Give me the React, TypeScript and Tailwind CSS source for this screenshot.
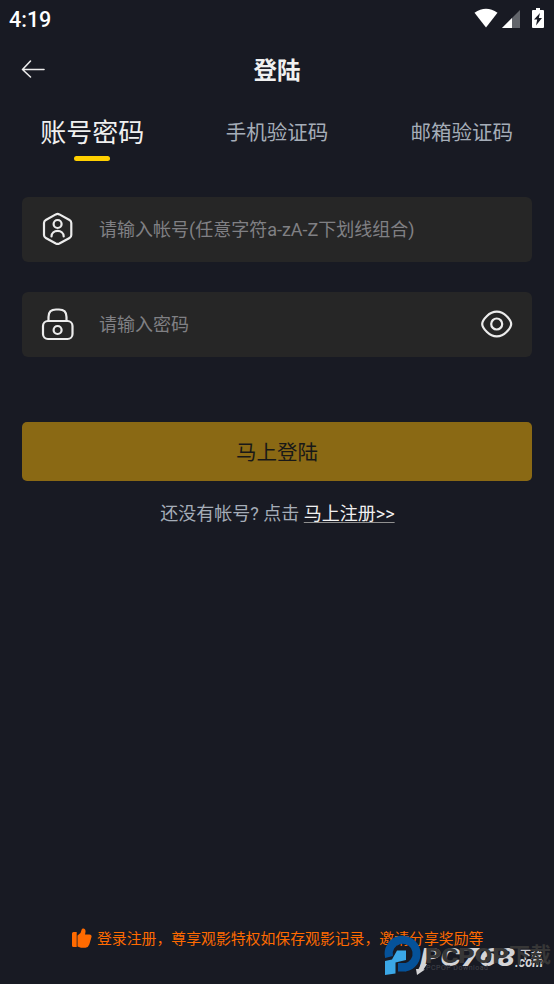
import React from "react";

const line = {
  fill: "none",
  stroke: "#ececec",
  strokeWidth: 2.2,
  strokeLinecap: "round" as const,
  strokeLinejoin: "round" as const,
};

function StatusBar() {
  return (
    <div className="flex h-[40px] items-center justify-between pl-[9px] pr-[10px]">
      <span className="text-[21.500px] font-medium leading-[38px] text-white font-['Roboto',sans-serif]">4:19</span>
      <div className="mb-[4px] flex items-center">
        <svg width="24" height="20" viewBox="0 0 24 20"><path d="M.5 4.700Q12-3.300 23.500 4.700L12 19.500Z" fill="#fff" /></svg>
        <svg className="ml-[4px] mt-[2px]" width="18" height="18" viewBox="0 0 18 18">
          <path d="M0 18L18 0V18Z" fill="#62656b" /><path d="M0 18L10 8V18Z" fill="#fff" />
        </svg>
        <svg className="ml-[12px]" width="12" height="20" viewBox="0 0 12 20">
          <path d="M4 0H8V2H11Q12 2 12 3V19Q12 20 11 20H1Q0 20 0 19V3Q0 2 1 2H4Z" fill="#fff" />
          <path d="M8 5L2 11.500H5.200L4 17.500L10 10H6.800Z" fill="#181a23" />
        </svg>
      </div>
    </div>
  );
}

function Field({ icon, hint, tail }: { icon: React.ReactNode; hint: string; tail?: React.ReactNode }) {
  return (
    <div className="flex h-[65px] items-center rounded-[6px] bg-[#262626] pb-[1px] pl-[19px] pr-[19px]">
      {icon}
      <span className="ml-[24px] flex-1 whitespace-nowrap text-[18px] text-[#808084]">{hint}</span>
      {tail}
    </div>
  );
}

function Watermark() {
  return (
    <svg className="absolute left-[380px] top-[930px]" width="174" height="54" viewBox="0 0 174 54">
      <path d="M9 27A14 14 0 1 1 25 37.500" fill="none" stroke="#05529a" strokeWidth="8" />
      <path d="M18 33H26V41.500H18Z" fill="#05529a" />
      <path d="M5 31L12 29.500L17 20.500H26V30L15.500 32.500V43.500L5 45Z" fill="#3ba7e6" />
      <g fontFamily="Roboto, sans-serif">
        <text x="40" y="36" fontSize="26.500" fontWeight="800" fontStyle="italic" fill="#d4d4d6" textLength="95" lengthAdjust="spacingAndGlyphs">PC768</text>
        <path d="M41 34H47L43.500 39.500H45L37 45L36 39H38.500Z" fill="#d4d4d6" />
        <text x="135" y="37" fontSize="14" fontWeight="700" fontStyle="italic" fill="#d4d4d6" textLength="28" lengthAdjust="spacingAndGlyphs">.com</text>
        <text x="140" y="29" fontSize="11" fontWeight="700" fill="#c8c8ca" fontFamily="'Noto Sans CJK SC', sans-serif">下载</text>
        <text x="45" y="33" fontSize="21" fontWeight="900" fill="#373737" textLength="84" lengthAdjust="spacingAndGlyphs">PCPOP</text>
        <text x="129" y="32" fontSize="21" fontWeight="700" fill="#373737" fontFamily="'Noto Sans CJK SC', sans-serif">下载</text>
        <text x="46" y="40" fontSize="7" fill="#42434a" textLength="62">PCPOP Download</text>
      </g>
    </svg>
  );
}

export default function App() {
  return (
    <main className="relative flex h-[984px] w-[554px] flex-col overflow-hidden bg-[#181a23] font-['Roboto','Noto_Sans_CJK_SC',sans-serif]">
      <StatusBar />
      <header className="grid h-[60px] grid-cols-[1fr_auto_1fr] items-center px-[21px]">
        <svg className="mb-[2px]" width="24" height="20" viewBox="0 0 24 20"><path d="M9.500 2L1.500 10.500L9.500 18M1.500 10.500H23" {...line} strokeWidth="1.6" /></svg>
        <h1 className="pt-[4px] text-[23.500px] font-bold text-[#f0f0f0]">登陆</h1>
        <span />
      </header>
      <nav className="grid h-[62px] grid-cols-3 text-center text-[20.500px] text-[#a5adb8]">
        <div className="flex flex-col items-center">
          <span className="mt-[13px] text-[26px] leading-[40px] text-[#f0f0f0]">账号密码</span>
          <i className="mt-[3px] block h-[5px] w-[36px] rounded-full bg-[#ffd000]" />
        </div>
        <span className="leading-[66px]">手机验证码</span>
        <span className="leading-[66px]">邮箱验证码</span>
      </nav>
      <section className="mx-[22px] mt-[35px] flex flex-col gap-[30px]">
        <Field
          hint="请输入帐号(任意字符a-zA-Z下划线组合)"
          icon={
            <svg width="34" height="34" viewBox="0 0 34 34" {...line}>
              <path d="M14.800 2.400Q16.600 1.500 18.400 2.400L28.500 8Q30.300 9 30.300 11V23Q30.300 25 28.500 26L18.400 31.500Q16.600 32.400 14.800 31.500L4.800 26Q3 25 3 23V11Q3 9 4.800 8Z" />
              <circle cx="16.600" cy="12" r="4" /><path d="M10.500 24.500C10.500 17 22.700 17 22.700 24.500" />
            </svg>
          }
        />
        <Field
          hint="请输入密码"
          icon={
            <svg width="34" height="34" viewBox="0 0 34 34" {...line}>
              <rect x="2" y="14" width="29.500" height="18" rx="5" />
              <path d="M7.500 14V10Q7.500 2.500 15 2.500H18Q25.500 2.500 25.500 10V14" /><circle cx="16.600" cy="23" r="4" />
            </svg>
          }
          tail={
            <svg width="32" height="34" viewBox="0 0 32 34" {...line}>
              <path d="M1.200 17C1.200 14.500 3.400 11.500 6 9C11.800 3.200 19.800 3.200 25.500 9C28.100 11.500 30.200 14.500 30.200 17S28.100 22.500 25.500 25C19.800 30.800 11.800 30.800 6 25C3.400 22.500 1.200 19.500 1.200 17Z" />
              <circle cx="15.700" cy="17" r="5.500" />
            </svg>
          }
        />
      </section>
      <button className="mx-[22px] mt-[65px] h-[59px] rounded-[5px] bg-[#8a6914] pt-[3px] text-[20.500px] text-[#181818]">马上登陆</button>
      <p className="mt-[19px] whitespace-nowrap pl-[1px] text-center text-[18px] leading-[28px] text-[#a5adb8]">
        还没有帐号? 点击 <a className="text-[#f0f0f0] underline decoration-[#909090] decoration-1 underline-offset-2">马上注册&gt;&gt;</a>
      </p>
      <footer className="mb-[33px] mt-auto flex items-center pl-[71px] text-[14.870px] leading-[24px] text-[#ff6a00]">
        <svg className="mb-[2px] mr-[5px]" width="21" height="20" viewBox="0 0 21 20" fill="#ff6a00">
          <path d="M2.500 4H5.700V19H2.500Q1 19 1 17.500V5.500Q1 4 2.500 4ZM6.500 7.500L9.500 5L10.500 2C11.300 -.3 15 0 14.500 4L14 6.500H18.500Q21 6.700 20.500 9L18.300 16.500Q17.300 19.500 14.500 19.700H10L6.500 18.500Z" />
        </svg>
        <span className="whitespace-nowrap">登录注册，尊享观影特权如保存观影记录，邀请分享奖励等</span>
      </footer>
      <Watermark />
    </main>
  );
}
